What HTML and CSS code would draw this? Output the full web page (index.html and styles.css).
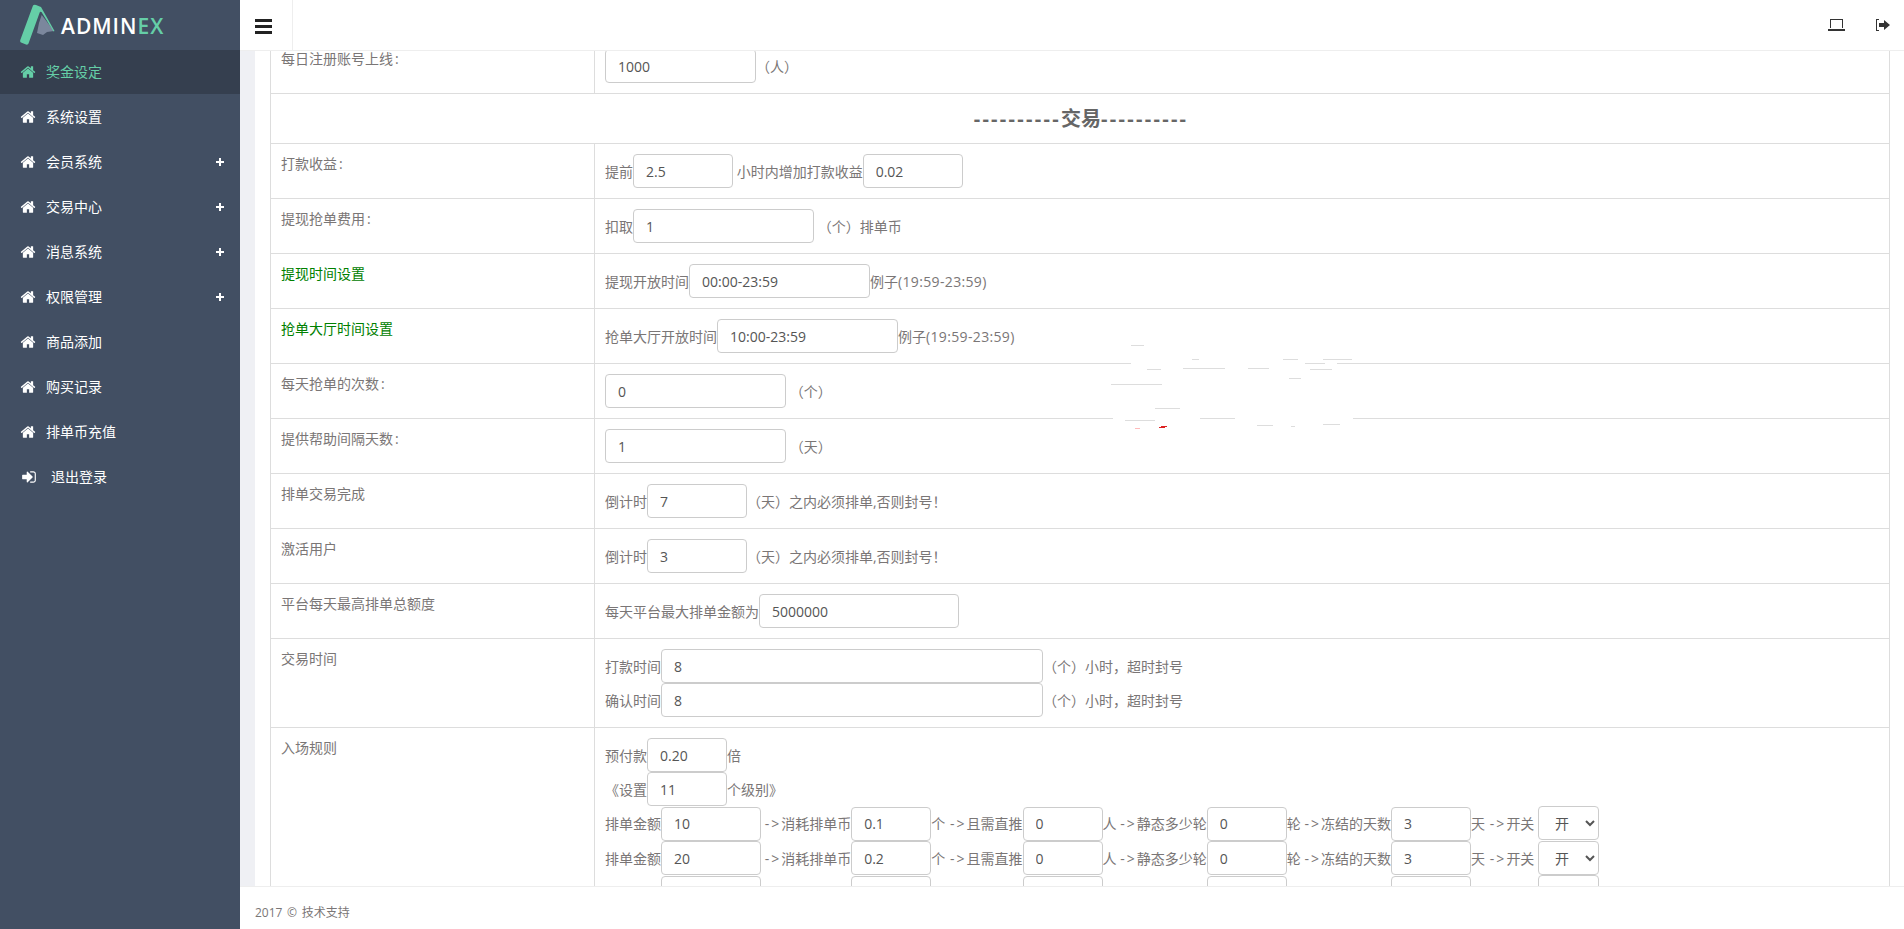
FILE: index.html
```html
<!DOCTYPE html>
<html lang="zh-CN">
<head>
<meta charset="utf-8">
<title>AdminEx</title>
<link rel="stylesheet" href="styles.css">
</head>
<body>
<svg class="defs" width="0" height="0" aria-hidden="true">
  <symbol id="home" viewBox="0 0 1792 1792"><path d="M1472 992v480q0 26-19 45t-45 19h-384v-384h-256v384h-384q-26 0-45-19t-19-45v-480q0-1 .5-3t.5-3l575-474 575 474q1 2 1 6zm223-69l-62 74q-8 9-21 11h-3q-13 0-21-7l-692-577-692 577q-12 8-24 7-13-2-21-11l-62-74q-8-10-7-23.500t11-21.500l719-599q32-26 76-26t76 26l244 204v-195q0-14 9-23t23-9h192q14 0 23 9t9 23v408l219 182q10 8 11 21.500t-7 23.500z"/></symbol>
  <symbol id="signin" viewBox="0 0 1792 1792"><path d="M1312 896q0 26-19 45l-544 544q-19 19-45 19t-45-19-19-45v-288h-448q-26 0-45-19t-19-45v-384q0-26 19-45t45-19h448v-288q0-26 19-45t45-19 45 19l544 544q19 19 19 45zm352-352v704q0 119-84.500 203.500t-203.500 84.500h-320q-13 0-22.500-9.500t-9.500-22.500q0-4-1-20t-.5-26.500 3-23.500 10-19.500 20.500-6.500h320q66 0 113-47t47-113v-704q0-66-47-113t-113-47h-312l-11.500-1-11.500-3-8-5.500-7-9-2-13.500q0-4-1-20t-.5-26.500 3-23.500 10-19.500 20.500-6.500h320q119 0 203.500 84.500t84.500 203.500z"/></symbol>
</svg>
<div class="app">
  <aside class="sidebar">
    <div class="logo">
      <svg class="logo-mark" viewBox="0 0 36 42" width="36" height="42" aria-hidden="true">
        <path class="logo-grey" d="M21.700 11 L34 27 L27 28 L23 31 L17 29 L19 19 Z"/>
        <path class="logo-green" d="M13 1.500 Q14 .5 16 1 L21 3 L34.500 27 L33.500 27.500 L21.500 8 Q20 7 19.500 9 L8.500 39.500 Q8 41 6 40.500 L1 38.500 Q-.2 38 .3 36 Z"/>
      </svg>
      <span class="logo-text">ADMIN<em>EX</em></span>
    </div>
    <nav class="menu">
      <a class="item active"><svg class="ico"><use href="#home"/></svg><span>奖金设定</span></a>
      <a class="item"><svg class="ico"><use href="#home"/></svg><span>系统设置</span></a>
      <a class="item"><svg class="ico"><use href="#home"/></svg><span>会员系统</span><i class="plus"></i></a>
      <a class="item"><svg class="ico"><use href="#home"/></svg><span>交易中心</span><i class="plus"></i></a>
      <a class="item"><svg class="ico"><use href="#home"/></svg><span>消息系统</span><i class="plus"></i></a>
      <a class="item"><svg class="ico"><use href="#home"/></svg><span>权限管理</span><i class="plus"></i></a>
      <a class="item"><svg class="ico"><use href="#home"/></svg><span>商品添加</span></a>
      <a class="item"><svg class="ico"><use href="#home"/></svg><span>购买记录</span></a>
      <a class="item"><svg class="ico"><use href="#home"/></svg><span>排单币充值</span></a>
      <a class="item logout"><svg class="ico"><use href="#signin"/></svg><span>退出登录</span></a>
    </nav>
  </aside>
  <main class="main">
    <header class="topbar">
      <div class="burger"><b></b><b></b><b></b></div>
      <div class="top-right">
        <svg class="top-ico" viewBox="0 0 17 12" width="17" height="12" aria-hidden="true">
          <path class="ink" d="M2 0h13v9h-1V1H3v8H2z"/><path class="ink" d="M0 10h17v2H0z"/>
        </svg>
        <svg class="top-ico" viewBox="0 0 15 12" width="15" height="12" aria-hidden="true">
          <path class="ink" d="M4 0v1H2v10h2v1H1V0z"/><path class="ink" d="M4 4h5V1l6 5-6 5V8H4z"/>
        </svg>
      </div>
    </header>
    <div class="scroll">
      <section class="panel">
        <table class="grid">
          <tr><td class="lab">每日注册账号上线<span class="c">:</span></td><td><input class="inp w151" value="1000">（人）</td></tr>
          <tr class="head"><td colspan="2"><span class="dash">----------</span>交易<span class="dash">----------</span></td></tr>
          <tr><td class="lab">打款收益<span class="c">:</span></td><td>提前<input class="inp w100" value="2.5"> 小时内增加打款收益<input class="inp w100" value="0.02"></td></tr>
          <tr><td class="lab">提现抢单费用<span class="c">:</span></td><td>扣取<input class="inp w181" value="1"> （个）排单币</td></tr>
          <tr><td class="lab green">提现时间设置</td><td>提现开放时间<input class="inp w181" value="00:00-23:59">例子<span class="eg">(19:59-23:59)</span></td></tr>
          <tr><td class="lab green">抢单大厅时间设置</td><td>抢单大厅开放时间<input class="inp w181" value="10:00-23:59">例子<span class="eg">(19:59-23:59)</span></td></tr>
          <tr><td class="lab">每天抢单的次数<span class="c">:</span></td><td><input class="inp w181" value="0"> （个）</td></tr>
          <tr><td class="lab">提供帮助间隔天数<span class="c">:</span></td><td><input class="inp w181" value="1"> （天）</td></tr>
          <tr><td class="lab">排单交易完成</td><td>倒计时<input class="inp w100" value="7">（天）之内必须排单,否则封号！</td></tr>
          <tr><td class="lab">激活用户</td><td>倒计时<input class="inp w100" value="3">（天）之内必须排单,否则封号！</td></tr>
          <tr><td class="lab">平台每天最高排单总额度</td><td>每天平台最大排单金额为<input class="inp w200" value="5000000"></td></tr>
          <tr>
            <td class="lab">交易时间</td>
            <td>
              <div class="line">打款时间<input class="inp w382" value="8">（个）小时，超时封号</div>
              <div class="line">确认时间<input class="inp w382" value="8">（个）小时，超时封号</div>
            </td>
          </tr>
          <tr>
            <td class="lab">入场规则</td>
            <td>
              <div class="line">预付款<input class="inp w80" value="0.20">倍</div>
              <div class="line">《设置<input class="inp w80" value="11">个级别》</div>
              <div class="line">排单金额<input class="inp w100" value="10"> <span class="arr">-&gt;</span>消耗排单币<input class="inp w80" value="0.1">个 <span class="arr wide">-&gt;</span>且需直推<input class="inp w80" value="0">人 <span class="arr">-&gt;</span>静态多少轮<input class="inp w80" value="0">轮 <span class="arr">-&gt;</span>冻结的天数<input class="inp w80" value="3">天 <span class="arr wide">-&gt;</span>开关 <select class="sel"><option>开</option></select></div>
              <div class="line">排单金额<input class="inp w100" value="20"> <span class="arr">-&gt;</span>消耗排单币<input class="inp w80" value="0.2">个 <span class="arr wide">-&gt;</span>且需直推<input class="inp w80" value="0">人 <span class="arr">-&gt;</span>静态多少轮<input class="inp w80" value="0">轮 <span class="arr">-&gt;</span>冻结的天数<input class="inp w80" value="3">天 <span class="arr wide">-&gt;</span>开关 <select class="sel"><option>开</option></select></div>
              <div class="line"><span class="below">排单金额</span><input class="inp w100"><span class="below"> <span class="arr">-&gt;</span>消耗排单币</span><input class="inp w80"><span class="below">个 <span class="arr wide">-&gt;</span>且需直推</span><input class="inp w80"><span class="below">人 <span class="arr">-&gt;</span>静态多少轮</span><input class="inp w80"><span class="below">轮 <span class="arr">-&gt;</span>冻结的天数</span><input class="inp w80"><span class="below">天 <span class="arr wide">-&gt;</span>开关 </span><select class="sel"></select></div>
            </td>
          </tr>
        </table>
      </section>
      <svg class="scratch" viewBox="0 0 300 100" width="300" height="100" aria-hidden="true">
        <path class="wipe" d="M31 19h206v1H31zM13 74h240v1H13z"/>
        <path class="frag" d="M31 1h13v1H31zM92 15h7v1h-7zM183 15h15v1h-15zM223 15h29v1h-29zM205 19h20v1h-20zM83 24h42v1H83zM148 24h21v1h-21zM47 25h14v1H47zM210 25h22v1h-22zM189 34h12v1h-12zM11 40h51v1H11zM55 64h25v1H55zM100 74h35v1h-35zM25 76h30v1H25zM223 80h17v1h-17zM157 81h16v1h-16zM191 82h4v1h-4z"/>
        <path class="red" d="M61 82h6v1h-6zM59 83h6v1h-6z"/>
        <path class="pink" d="M35 84h5v1h-5z"/>
      </svg>
    </div>
    <footer class="foot">2017 © 技术支持</footer>
  </main>
</div>
</body>
</html>
```
FILE: styles.css
```css
* { box-sizing: border-box; }
html, body { margin: 0; height: 100%; overflow: hidden; }
body {
  font-family: "Open Sans", "Noto Sans CJK SC", sans-serif;
  font-size: 14px;
  line-height: 20px;
  color: #7a7676;
  background: #fff;
}
.defs { position: absolute; }
.app { display: flex; height: 929px; }

.sidebar { width: 240px; flex: none; background: #424f63; }
.logo { height: 50px; display: flex; align-items: center; padding-left: 20px; }
.logo-mark { margin-top: -1px; flex: none; }
.logo-green { fill: #65cea7; }
.logo-grey { fill: #7b879d; }
.logo-text { margin-left: 5px; font-family: "Open Sans", sans-serif; font-size: 21px; font-weight: 600; color: #fff; letter-spacing: 1px; line-height: 1; margin-top: 2px; }
.logo-text em { font-style: normal; color: #65cea7; }
.item { height: 45px; display: flex; align-items: center; padding: 0 16px 1px 20px; color: #fff; font-size: 14px; }
.item.active { background: #353f4f; color: #65cea7; height: 44px; margin-bottom: 1px; padding-bottom: 0; }
.ico { width: 16px; height: 16px; fill: currentColor; flex: none; margin-right: 10px; }
.logout .ico { margin-right: 14px; margin-left: 1px; }
.plus { margin-left: auto; width: 8px; height: 8px; flex: none; background: linear-gradient(#fff,#fff) center/8px 2px no-repeat, linear-gradient(#fff,#fff) center/2px 8px no-repeat; }

.main { flex: 1; min-width: 0; display: flex; flex-direction: column; position: relative; }
.topbar { height: 51px; flex: none; display: flex; align-items: center; justify-content: space-between; border-bottom: 1px solid #eee; background: #fff; position: relative; z-index: 2; }
.burger { width: 53px; height: 50px; padding: 19px 0 0 15px; border-right: 1px solid #eee; display: flex; flex-direction: column; gap: 3px; }
.burger b { display: block; width: 17px; height: 3px; background: #222; }
.top-right { display: flex; gap: 30px; padding-right: 14px; align-items: center; margin-top: -1px; }
.ink { fill: #333; }

.scroll { flex: 1; min-height: 0; overflow: hidden; background: #eff0f4; padding-left: 15px; position: relative; }
.panel { background: #fff; padding: 0 14px 0 15px; margin-top: -13px; height: 2000px; }
.grid { width: 100%; border-collapse: collapse; table-layout: fixed; }
.grid td { border: 1px solid #ddd; padding: 10px; vertical-align: top; }
.grid td.lab { width: 324px; }
.green { color: green; }
.c { margin-left: 2px; }
.eg { letter-spacing: .35px; }
.arr { letter-spacing: 2px; }
.arr.wide { margin-left: 1.300px; }
.grid .head td { text-align: center; font-size: 20px; font-weight: 700; color: #666; height: 50px; vertical-align: middle; padding: 1px 0 0 2px; }
.head .dash { letter-spacing: 2.300px; }
.below { visibility: hidden; }

.inp { height: 34px; border: 1px solid #ccc; border-radius: 4px; padding: 6px 12px; font: 14px/20px "Open Sans", "Noto Sans CJK SC", sans-serif; color: #555; background: #fff; vertical-align: baseline; outline: none; }
.w80 { width: 80px; }
.w100 { width: 100px; }
.w151 { width: 151px; }
.w181 { width: 181px; }
.w200 { width: 200px; }
.w382 { width: 382px; }
.sel { width: 61px; height: 34px; border: 1px solid #ccc; border-radius: 4px; padding: 6px 12px; font: 14px/20px "Open Sans", "Noto Sans CJK SC", sans-serif; color: #555; background: #fff; }

.scratch { position: absolute; left: 860px; top: 293px; }
.wipe { fill: #fff; }
.frag { fill: #ddd; }
.red { fill: #d22; }
.pink { fill: #fbb; }

.foot { height: 43px; flex: none; border-top: 1px solid #eee; background: #fff; padding: 16px 0 0 15px; font-size: 12px; word-spacing: 1.500px; line-height: 20px; color: #7a7676; position: relative; z-index: 2; }
```
